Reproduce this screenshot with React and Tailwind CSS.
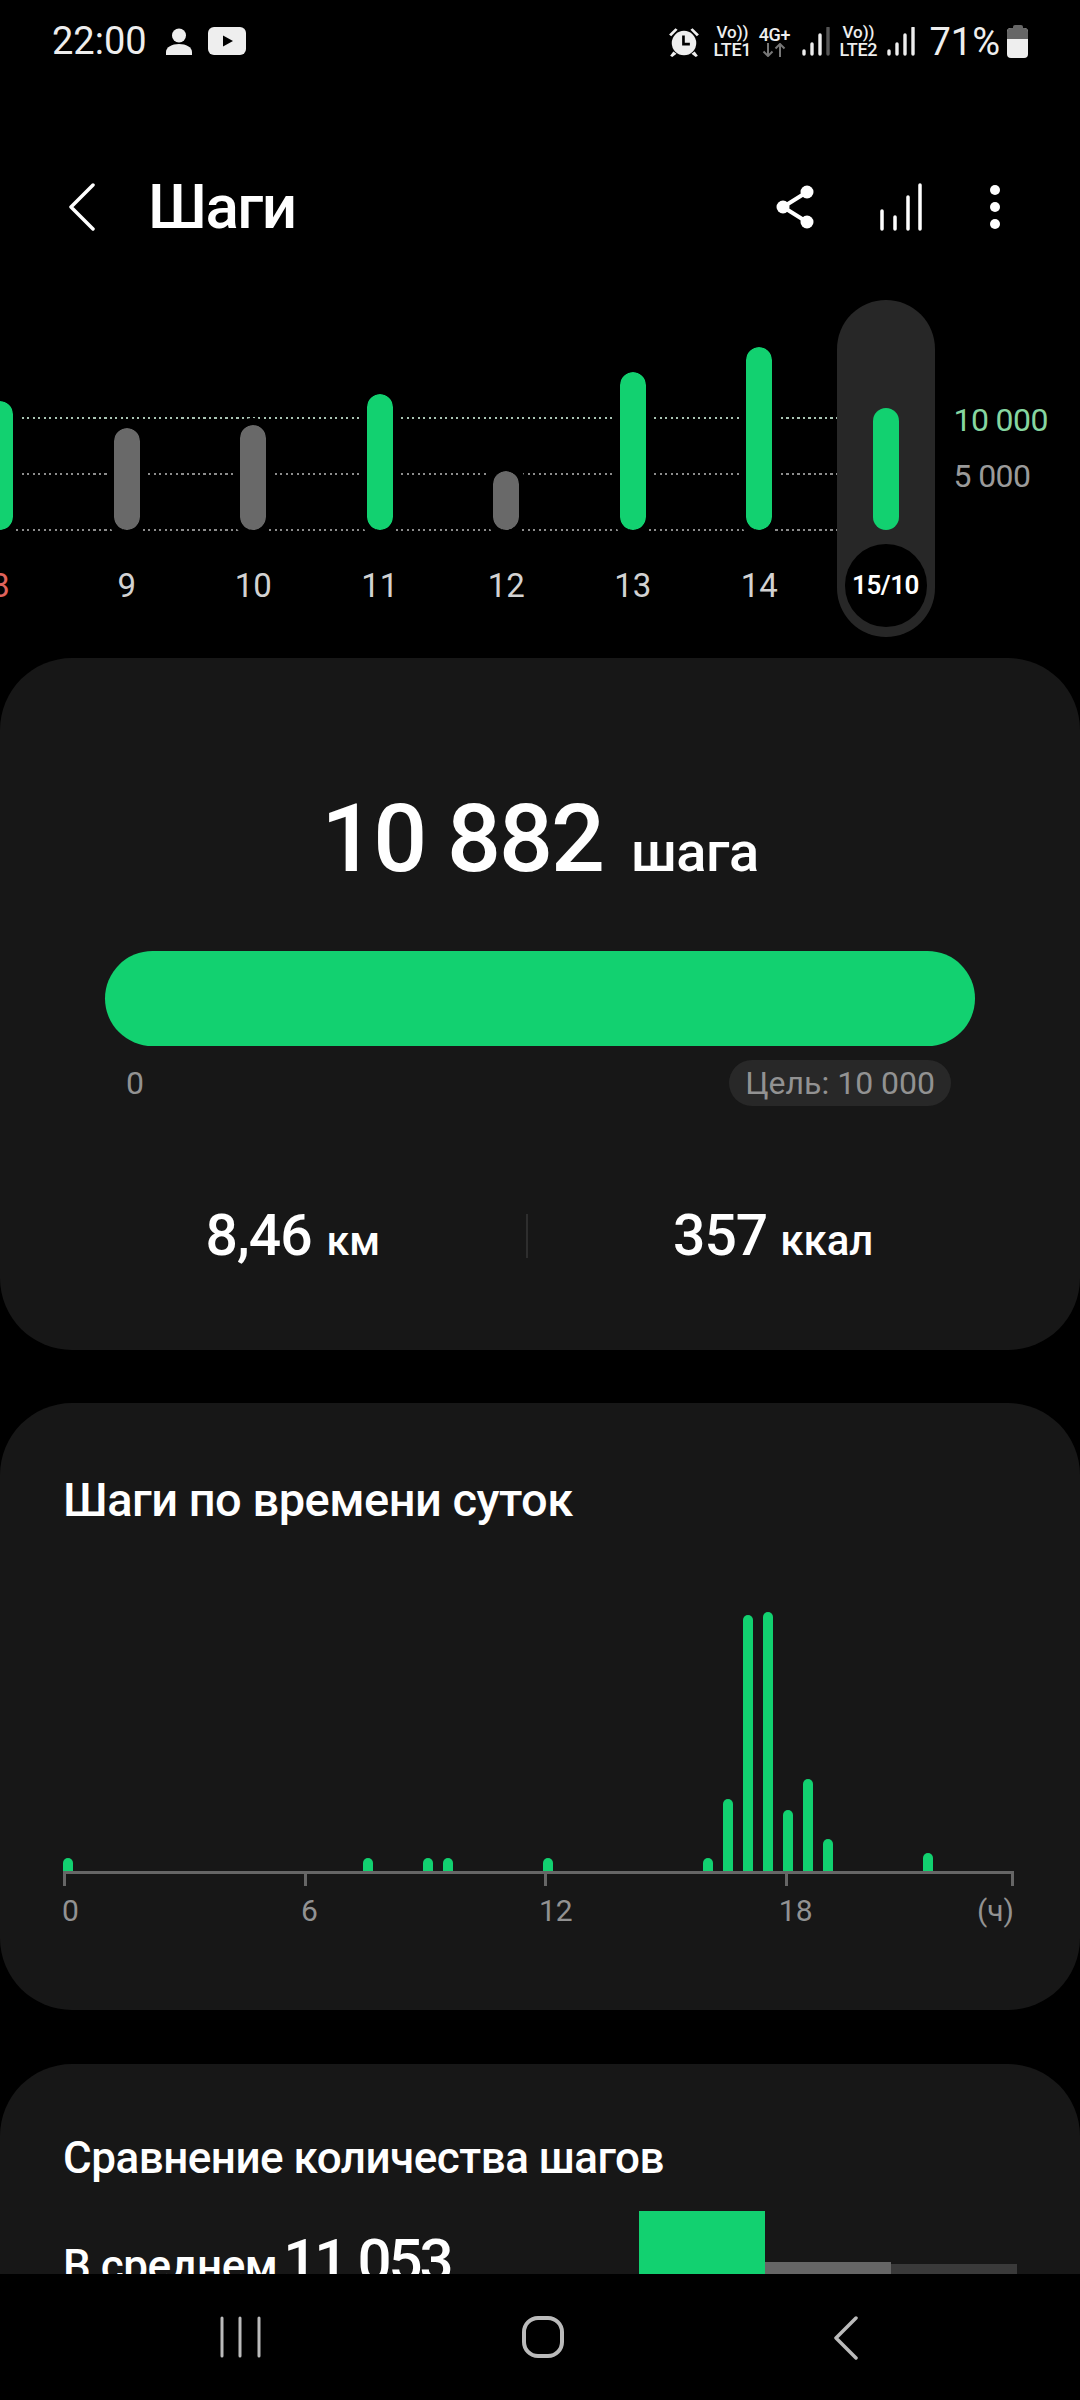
import React from "react";

const GREEN = "bg-[#12d170]";

const days = [
  { label: "8", h: 129, on: true, red: true },
  { label: "9", h: 102 },
  { label: "10", h: 105 },
  { label: "11", h: 136, on: true },
  { label: "12", h: 59 },
  { label: "13", h: 158, on: true },
  { label: "14", h: 183, on: true },
];

const hourBars = [
  { x: 0, h: 13 },
  { x: 15, h: 13 },
  { x: 18, h: 13 },
  { x: 19, h: 13 },
  { x: 24, h: 13 },
  { x: 32, h: 13 },
  { x: 33, h: 72 },
  { x: 34, h: 256 },
  { x: 35, h: 259 },
  { x: 36, h: 61 },
  { x: 37, h: 92 },
  { x: 38, h: 32 },
  { x: 43, h: 18 },
];

const Signal = ({ fade }) => (
  <svg width="30" height="30" viewBox="0 0 30 30" fill="none" strokeLinecap="round" strokeWidth="3.4">
    <path d="M4 27v-3" stroke="#eee" />
    <path d="M12 27V17" stroke="#eee" />
    <path d="M20 27V8" stroke="#eee" />
    <path d="M28 27V1" stroke={fade ? "#555" : "#eee"} />
  </svg>
);

const Net = ({ label }) => (
  <div className="w-[40px] flex flex-col items-center text-[#eee] leading-none whitespace-nowrap">
    <span className="text-[17px] font-medium h-[17px]">Vo))</span>
    <span className="text-[18px] font-medium tracking-[-0.3px]">{label}</span>
  </div>
);

const StatusBar = () => (
  <div className="h-[80px] flex items-start justify-between pl-[52px] pr-[52px] pt-[24px] text-[#eee]">
    <div className="flex items-center">
      <span className="text-[38px] leading-[34px]">22:00</span>
      <svg className="ml-[18px]" width="28" height="27" viewBox="0 0 28 27" fill="#eee">
        <circle cx="14" cy="7.5" r="7" />
        <path d="M1 27v-3c0-5 6-8 13-8s13 3 13 8v3z" />
      </svg>
      <svg className="ml-[15px]" width="38" height="28" viewBox="0 0 38 28">
        <rect width="38" height="28" rx="6" fill="#eee" />
        <path d="M15 8.5l10 5.500-10 5.500z" fill="#000" />
      </svg>
    </div>
    <div className="flex items-center">
      <svg width="32" height="32" viewBox="0 0 30 30" fill="#eee">
        <circle cx="15" cy="16" r="11.500" />
        <path d="M1 8l6-6 2 1.500-6 6zM29 8l-6-6-2 1.500 6 6zM5 24l-3 4 2 1 4-3zM25 24l3 4-2 1-4-3z" />
        <path d="M14.500 9v8h6" fill="none" stroke="#000" strokeWidth="2.500" />
      </svg>
      <div className="ml-[12px]"><Net label="LTE1" /></div>
      <div className="ml-[7px] w-[30px] flex flex-col items-center leading-none">
        <span className="text-[18px] font-medium h-[17px] text-[#eee] tracking-[-0.3px]">4G+</span>
        <svg width="24" height="14" viewBox="0 0 24 14" fill="none" stroke="#777" strokeWidth="2">
          <path d="M6 0v13M1.500 8.500L6 13l4.500-4.500M18 14V1M13.500 5.500L18 1l4.500 4.500" />
        </svg>
      </div>
      <div className="ml-[11px]"><Signal fade /></div>
      <div className="ml-[8px]"><Net label="LTE2" /></div>
      <div className="ml-[7px]"><Signal /></div>
      <span className="ml-[14px] text-[38px] leading-[34px]">71%</span>
      <div className="ml-[7px] flex flex-col items-center">
        <div className="w-[10px] h-[3px] bg-[#666] rounded-t-[2px]" />
        <div className="w-[21px] h-[30px] rounded-[4px] overflow-hidden bg-[#eee]">
          <div className="h-[11px] bg-[#666]" />
        </div>
      </div>
    </div>
  </div>
);

const Header = () => (
  <div className="h-[220px] pt-[33px] flex items-center justify-between pl-[69px] pr-[79px] text-white">
    <div className="flex items-center">
      <svg width="26" height="48" viewBox="0 0 26 48" fill="none" stroke="#fff" strokeWidth="3.500" strokeLinecap="round" strokeLinejoin="round">
        <path d="M24 2L2 24l22 22" />
      </svg>
      <span className="ml-[53px] text-[62px] leading-none font-medium tracking-[-1.5px]">Шаги</span>
    </div>
    <div className="flex items-center">
      <svg width="38" height="44" viewBox="0 0 38 44" fill="#fff">
        <circle cx="31" cy="7" r="6.500" />
        <circle cx="7" cy="22" r="6.500" />
        <circle cx="31" cy="37" r="6.500" />
        <path d="M31 7L7 22l24 15" fill="none" stroke="#fff" strokeWidth="4" />
      </svg>
      <svg className="ml-[65px]" width="44" height="48" viewBox="0 0 44 48" fill="none" stroke="#fff" strokeWidth="3.500" strokeLinecap="round">
        <path d="M3 46V28M16 46V34M29 46V14M41 46V2" />
      </svg>
      <svg className="ml-[66px]" width="12" height="46" viewBox="0 0 12 46" fill="#fff">
        <circle cx="6" cy="6" r="5" />
        <circle cx="6" cy="23" r="5" />
        <circle cx="6" cy="40" r="5" />
      </svg>
    </div>
  </div>
);

const DayColumn = ({ label, h, on, red }) => (
  <div className="relative z-10 w-[126.500px] shrink-0 flex flex-col items-center">
    <div className="h-[230px] flex items-end">
      <div
        className={`w-[26px] rounded-full outline-[7px] outline-black ${on ? GREEN : "bg-[#696969]"}`}
        style={{ height: h }}
      />
    </div>
    <div className={`mt-[14px] h-[83px] flex items-center justify-center text-[33px] ${red ? "text-[#e0635c]" : "text-[#d2d2d2]"}`}>
      {label}
    </div>
  </div>
);

const DotLine = ({ green, y }) => (
  <div
    className={`absolute left-0 w-[837px] h-[2px] ${
      green
        ? "bg-[repeating-linear-gradient(90deg,#a9c4b3_0_2px,transparent_2px_5.500px)]"
        : "bg-[repeating-linear-gradient(90deg,#8c8c8c_0_2px,transparent_2px_5.500px)]"
    }`}
    style={{ top: y }}
  />
);

const WeekChart = () => (
  <div className="relative h-[337px] mb-[21px] overflow-hidden">
    <DotLine green y={117} />
    <DotLine y={173} />
    <DotLine y={229} />
    <div className="flex -ml-[63px]">
      {days.map((d) => (
        <DayColumn key={d.label} {...d} />
      ))}
      <div className="relative z-10 w-[98px] -mr-[14px] ml-[14px] h-[337px] rounded-full bg-[#272727] shrink-0 flex flex-col items-center">
        <div className="h-[230px] flex items-end">
          <div className={`w-[26px] h-[122px] rounded-full ${GREEN}`} />
        </div>
        <div className="mt-[14px] w-[82px] h-[83px] rounded-full bg-black flex items-center justify-center text-white text-[26px] font-semibold tracking-[-0.5px]">
          15/10
        </div>
      </div>
      <div className="relative z-10 ml-[33px] pt-[104px] text-[32px] leading-[32px] tracking-[-0.6px]">
        <div className="text-[#86d6a0] h-[56px] whitespace-nowrap">10 000</div>
        <div className="text-[#9a9a9a] whitespace-nowrap">5 000</div>
      </div>
    </div>
  </div>
);

const SummaryCard = () => (
  <div className="h-[692px] rounded-[72px] bg-[#171717] mb-[53px] pt-[136px] flex flex-col items-center">
    <div className="flex items-baseline text-white h-[90px]">
      <span className="text-[95px] leading-[90px] font-medium tracking-[-2px]">10 882</span>
      <span className="ml-[28px] text-[56px] leading-none font-medium tracking-[-0.5px]">шага</span>
    </div>
    <div className={`mt-[67px] w-[870px] h-[95px] rounded-full ${GREEN}`} />
    <div className="mt-[13px] w-[870px] flex items-center justify-between text-[32px] text-[#929292]">
      <span className="ml-[21px]">0</span>
      <span className="mr-[24px] h-[46px] px-[16px] rounded-full bg-[#282828] flex items-center">Цель: 10 000</span>
    </div>
    <div className="mt-[100px] w-full flex items-center text-white font-medium">
      <div className="w-[526px] flex items-baseline justify-end pr-[146px]">
        <span className="text-[57px] leading-none tracking-[-1px]">8,46</span>
        <span className="ml-[15px] text-[41px] leading-none">км</span>
      </div>
      <div className="w-[2px] h-[44px] bg-[#2e2e2e]" />
      <div className="flex items-baseline pl-[145px]">
        <span className="text-[57px] leading-none tracking-[-1px]">357</span>
        <span className="ml-[13px] text-[42px] leading-none">ккал</span>
      </div>
    </div>
  </div>
);

const HourChart = () => (
  <div className="ml-[63px] w-[951px] mt-[86px]">
    <div className="h-[260px] flex items-end">
      {Array.from({ length: 47 }, (_, i) => {
        const bar = hourBars.find((b) => b.x === i);
        return (
          <div key={i} className="w-[20px] shrink-0 flex justify-start">
            {bar && <div className={`w-[10px] rounded-t-full ${GREEN}`} style={{ height: bar.h }} />}
          </div>
        );
      })}
    </div>
    <div className="h-[3px] bg-[#666]" />
    <div className="flex h-[12px] justify-between">
      <div className="flex w-[725px] justify-between">
        <div className="w-[3px] bg-[#666]" />
        <div className="w-[3px] bg-[#666]" />
        <div className="w-[3px] bg-[#666]" />
        <div className="w-[3px] bg-[#666]" />
      </div>
      <div className="w-[3px] bg-[#666]" />
    </div>
    <div className="flex mt-[8px] text-[30px] leading-[34px] text-[#929292]">
      <span className="w-[240px] -ml-[1px]">0</span>
      <span className="w-[239px]">6</span>
      <span className="w-[241px]">12</span>
      <span className="w-[199px]">18</span>
      <span>(ч)</span>
    </div>
  </div>
);

const HoursCard = () => (
  <div className="h-[607px] rounded-[72px] bg-[#171717] mb-[54px] pt-[72px]">
    <div className="ml-[63px] text-[47px] leading-[50px] font-medium text-white tracking-[-0.5px]">
      Шаги по времени суток
    </div>
    <HourChart />
  </div>
);

const CompareCard = () => (
  <div className="rounded-t-[72px] bg-[#171717] h-[400px] pt-[69px] relative">
    <div className="ml-[63px] text-[44px] leading-[50px] font-medium text-white tracking-[-0.5px]">
      Сравнение количества шагов
    </div>
    <div className="mt-[28px] flex items-start justify-between pl-[63px] pr-[63px]">
      <div className="flex items-baseline text-white pt-[20px]">
        <span className="text-[44px] font-medium leading-none tracking-[-0.5px]">В среднем</span>
        <span className="ml-[6px] text-[60px] leading-none font-medium tracking-[-3px]">11 053</span>
      </div>
      <div className="flex items-start">
        <div className={`w-[126px] h-[120px] ${GREEN}`} />
        <div className="w-[126px] h-[70px] mt-[51px] bg-[#666]" />
        <div className="w-[126px] h-[70px] mt-[53px] bg-[#3a3a3a]" />
      </div>
    </div>
  </div>
);

const NavBar = () => (
  <div className="absolute left-0 right-0 bottom-0 h-[126px] bg-black flex items-start pt-[42px]">
    <svg className="ml-[220px]" width="42" height="42" viewBox="0 0 42 42" fill="none" stroke="#bbb" strokeWidth="3" strokeLinecap="round">
      <path d="M2 2v38M20 2v38M39 2v38" />
    </svg>
    <svg className="ml-[260px]" width="42" height="42" viewBox="0 0 42 42" fill="none" stroke="#bbb" strokeWidth="4">
      <rect x="2" y="2" width="38" height="38" rx="14" />
    </svg>
    <svg className="ml-[270px]" width="24" height="44" viewBox="0 0 24 44" fill="none" stroke="#bbb" strokeWidth="3.500" strokeLinecap="round" strokeLinejoin="round">
      <path d="M22 2L2 22l20 20" />
    </svg>
  </div>
);

const App = () => {
  return (
    <div className="relative w-[1080px] h-[2400px] overflow-hidden bg-black font-['Roboto',sans-serif]">
      <StatusBar />
      <Header />
      <WeekChart />
      <SummaryCard />
      <HoursCard />
      <CompareCard />
      <NavBar />
    </div>
  );
};

export default App;
